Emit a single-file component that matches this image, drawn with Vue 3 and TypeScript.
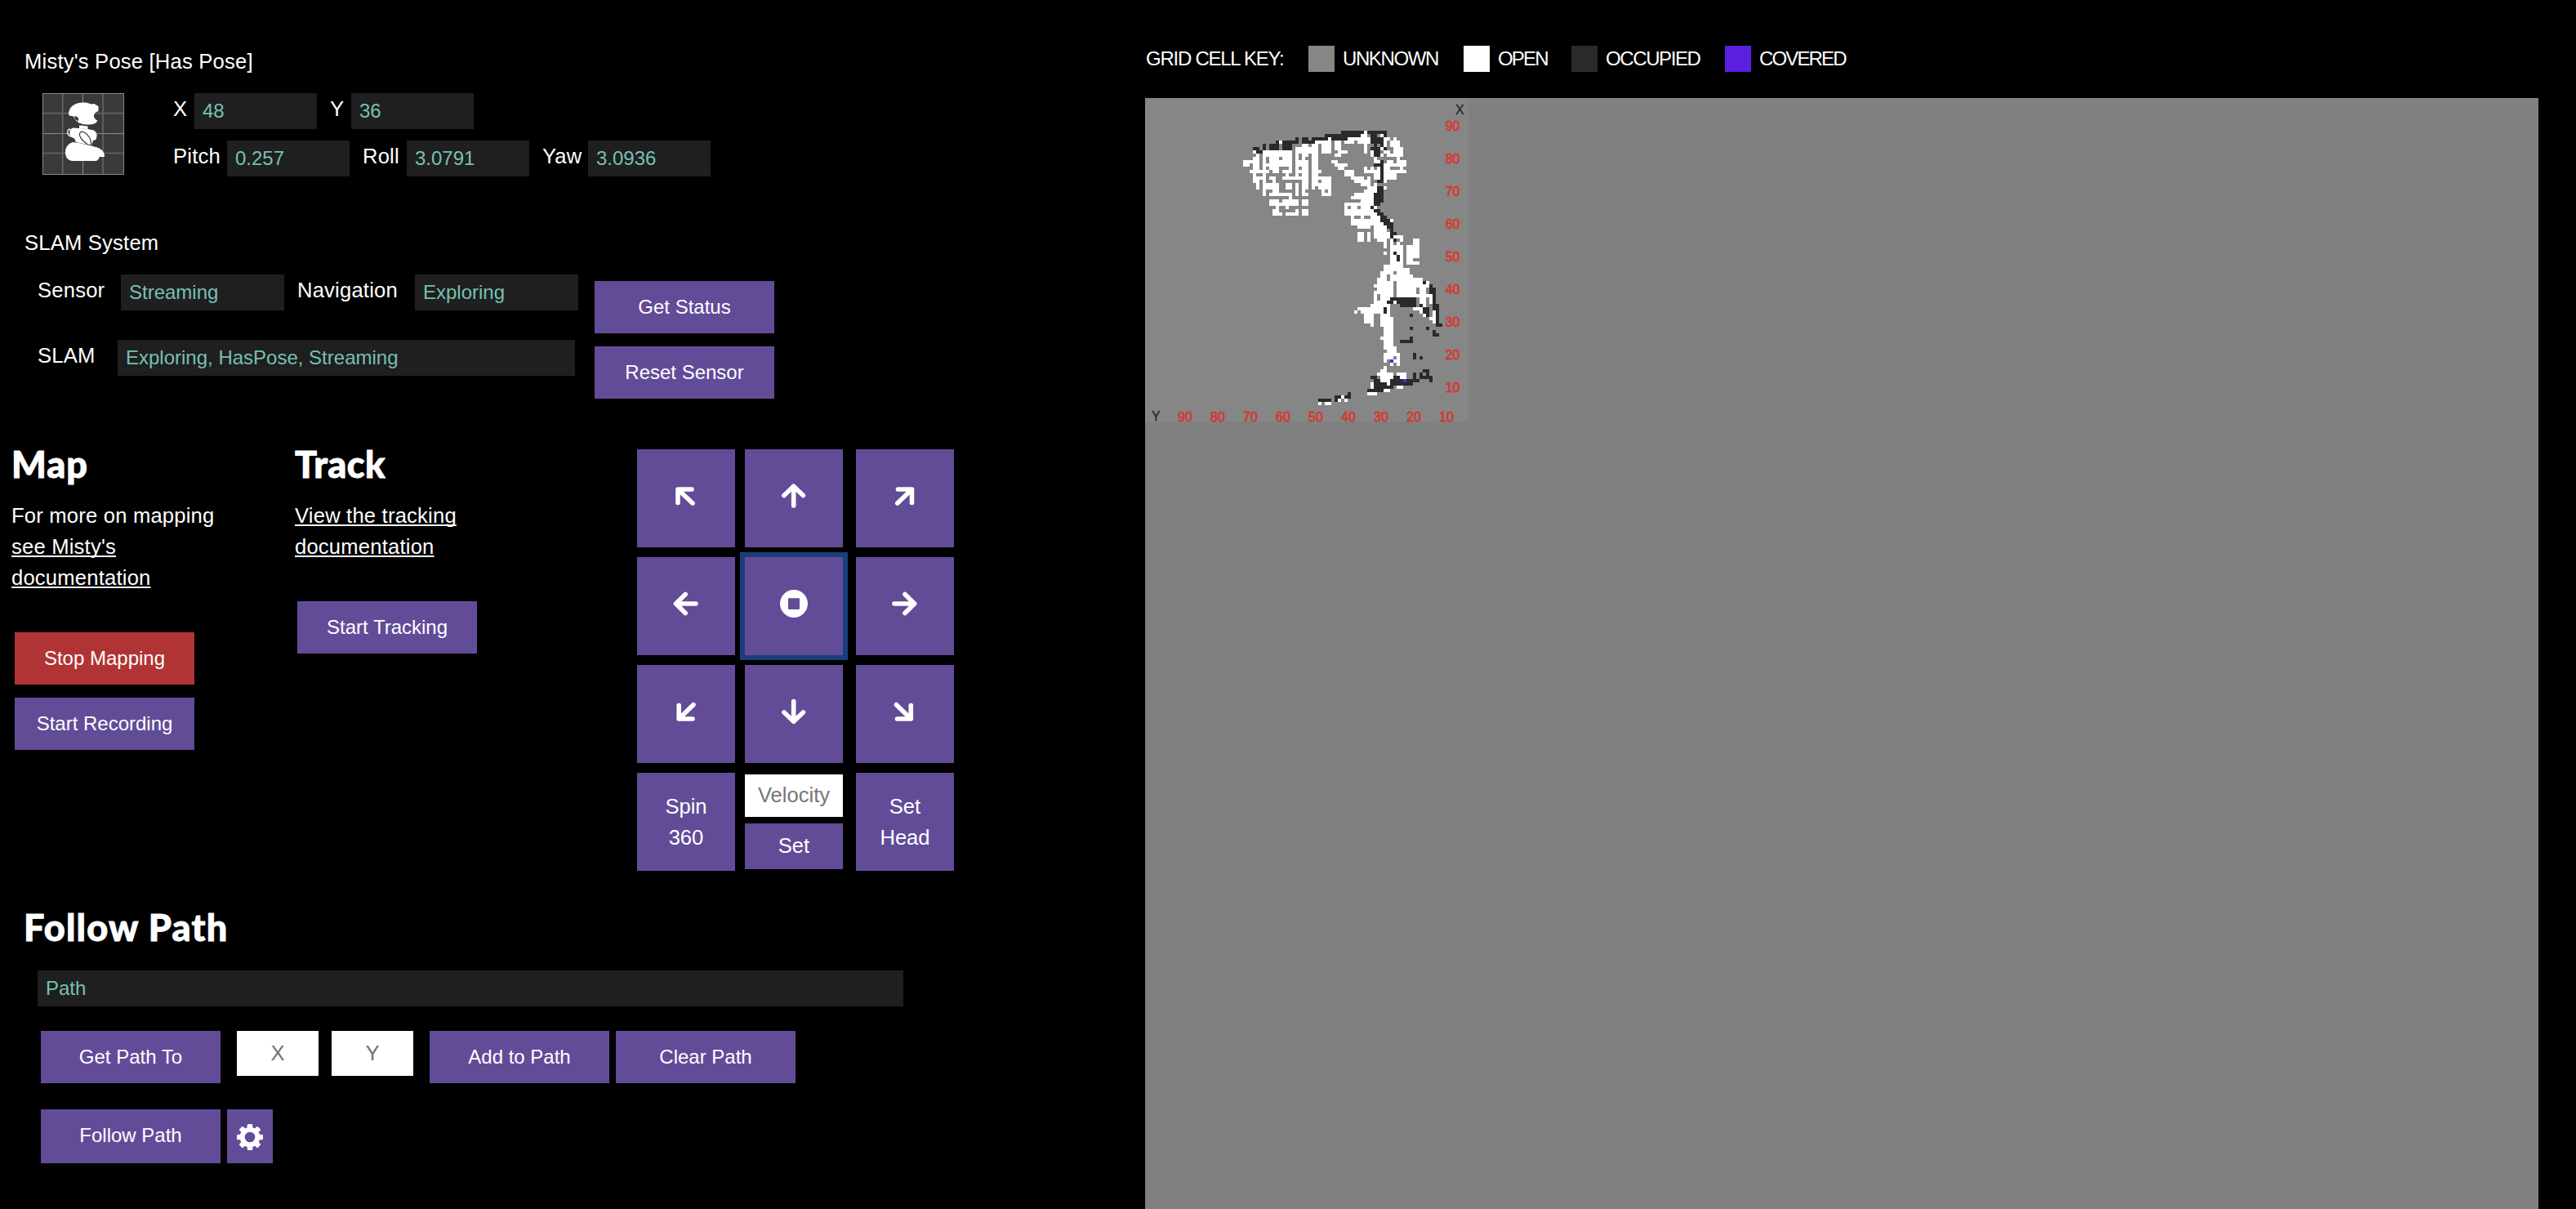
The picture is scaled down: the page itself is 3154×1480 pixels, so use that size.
<script setup lang="ts">
type Kind = 'd' | 'w' | 'p'
interface Run { x: number; y: number; w: number; kind: Kind }

const FIRST_ROW = 10

// Each entry is one grid row; a token is "<kind><first column>[-<last column>]".
const rows: string[] = [
  'd60-66 w67 d68-73',
  'd55-65 w66-67 d69-70 w72 d73',
  'd46 d48-49 d51-55 w56 d57-61 w62-68 d69-72 w73-74 w76',
  'd40 w41 d42-46 d48-51 w52-56 w58-59 w61-63 w65-68 d69-72 w73 w75-77',
  'd36 d38-40 d42-44 w48-49 w51-52 w54-56 w58-59 w67 d70 d72 w73 w75-77',
  'd33-34 d36 d38-40 d42-44 w46-52 w54-56 w58-59 w67 d69-71 w72 d73 w76-78',
  'w33 d34-35 w36-44 w46-52 w54-56 w59-61 w67 w69 d70-71 w73-74 w76-78',
  'w34 w36-44 w46 w48-49 w51-52 w58-59 w69 d70-71 w72 w74-78',
  'w33-34 w36 w38-40 w42-44 w46 w48 w51-52 w70 w77',
  'w30-34 w36 w38-44 w46-49 w51-52 w57-58 w70-71 d72 w74-75 w77-79',
  'w30-31 w33-34 w36-44 w46-49 w51-52 w58-61 d70-72 w73-79',
  'w33-34 w36 w38-40 w44 w46 w48-49 w51-52 w59-60 w67 w69 w71 d72 w73-74 w78',
  'w32-37 w39-40 w42-44 w46-49 w51-53 w61-63 w67-71 d72 w73-79',
  'w33 w36 w43 w46 w48-49 w51-52 w61-63 w70-71 d72 w73-76',
  'w33-36 w38-39 w42-49 w51-56 w63-66 w68 w70-71 d72 w73-76',
  'w33-34 w36 w39 w48-49 w51-52 w54-56 w64-68 d71-72 w73',
  'w34 w36-40 w43-44 w46 w48-49 w51-56 w66-68 w70',
  'w34 w36-40 w43-44 w46 w48-49 w51 w53-56 w68-70 d71-72 w73',
  'w36 w39-40 w46 w48 w54 w56 w67-70 d71-72',
  'w36 w38-44 w46 w48-49 w54-56 w64-69 d70-72',
  'w44 w63-69 d70-72',
  'w38-40 w42-46 w48-49 w66-69 d70-72',
  'w38-46 w48-49 w61-69 d70-71',
  'w40 w43 w61 w63-64 w66-68 d69 w70',
  'w39-40 w46 w48-49 w61-69 d70-71',
  'w39-41 w43-46 w48-49 w61-70 d71-72',
  'w63 w66 w69-71 d72-73',
  'w63-71 d72-74 w75',
  'w63-72 d73-75',
  'w65-68 w70-73 d74-75',
  'w70-73 d75',
  'w65-66 w68 w70-74 d75-76',
  'w65-66 w68 w70-74 d75 w76-78',
  'w65-66 w68 w71-73 w75 d76 w78 w82-83',
  'w73 w75 w77 w82-83',
  'w73 w75-78 w80-83',
  'w75-78 w80-83',
  'w73 w75 d76 w77-78 w80-83',
  'w75-76 d77 w78 w80-83',
  'w75-76 d77 w78 w80-81',
  'w75-78 w80-83',
  'w73-78',
  'w73-80',
  'w72-75 w77-80',
  'w72-73 w75-81',
  'w71-73 w75-84',
  'w71-75 w77-84 d85 w86',
  'w70-75 w77-86 d87',
  'w71-75 w77-82 w84-85 d87-88',
  'w70-75 w77-82 w84-85 d87-88',
  'w70 w72-75 w77-87 d88',
  'w70 w72-74 d75-82 w84-85 w87 d88',
  'w70-73 d74-75 w76 d77-82 w84-85 w87 d88',
  'w69-74 d78-82 d84 w85 d88-89',
  'w65-72 d73 w74 w82-84 d85-86 d88-89',
  'w64 w66-72 d73 w74 w84 d85-86 w88 d89',
  'w67-69 w72-74 d81 w85 d86 w88 d89',
  'w67-69 w72-75 w87-88 d89',
  'w67-69 w72-75 w88 d89',
  'w69 w72-75 d89-90',
  'w73-75 d81 d86',
  'w73-75 d88',
  'w73-75 d88-89',
  'w72-75 d81',
  'w73-75 d78-81',
  'w73-75',
  'w73-76',
  'w74-76',
  'w73-77 d82',
  'w73-75 w77 d82 d84',
  'w73 p75 w76-77',
  'w75 w77',
  'w73',
  'w72-73 d85-86',
  'w71-75 w77-79 d82 d84 d86',
  'd69-70 w72-75 d76-77 w78-79 d82 d84-87',
  'd70-71 w72-74 d75-78 p79 d80-83 d87',
  'w69 d70-73 w74 d75-81',
  'w69 d70-75 w77-78',
  'd68-72 w73-74',
  'd62 w68-70',
  'd58-59 w60 d61-62',
  'd53-56 d58 w59 w61',
  'w53 w55-56',
]

const fills: Record<Kind, string> = { d: '#2a2a2a', w: '#ffffff', p: '#5b1fe0' }

const runs: Run[] = rows.flatMap((row, i) =>
  row.split(' ').map((token) => {
    const [from, to] = token.slice(1).split('-').map(Number)
    return { x: from * 4, y: (FIRST_ROW + i) * 4, w: ((to ?? from) - from + 1) * 4, kind: token[0] as Kind }
  }),
)

const ticks = [90, 80, 70, 60, 50, 40, 30, 20, 10]

const legend = [
  { name: 'UNKNOWN', cls: 'unknown' },
  { name: 'OPEN', cls: 'open' },
  { name: 'OCCUPIED', cls: 'occupied' },
  { name: 'COVERED', cls: 'covered' },
]

interface PadKey { id: string; d: string }
const pad: PadKey[] = [
  { id: 'up-left', d: 'M67 49H50V65.500M50.500 49.500L68 66' },
  { id: 'up', d: 'M48 56.500L59.700 45.200L71.400 56.500M59.700 46V69' },
  { id: 'up-right', d: 'M51.500 49H68.500V65.500M68 49.500L50.800 66' },
  { id: 'left', d: 'M59.200 45.500L47.500 57L59.200 68.500M48 57H72' },
  { id: 'stop', d: '' },
  { id: 'right', d: 'M60 45.500L71.700 57L60 68.500M71 57H47' },
  { id: 'down-left', d: 'M51.200 49.500V66H68M51.700 65.500L69 48.700' },
  { id: 'down', d: 'M48 58L59.700 69.300L71.400 58M59.700 68.500V44.500' },
  { id: 'down-right', d: 'M67.300 49.500V66H50.500M66.800 65.500L49.500 48.700' },
]
</script>

<template>
  <main class="page">
    <section class="controls">
      <div class="title pose-title">Misty's Pose [Has Pose]</div>
      <div class="pose">
        <svg class="robot" viewBox="0 0 100 100">
          <rect width="100" height="100" fill="#3a3a3a" />
          <path d="M24.700 0V100M74 0V100M0 24.700H100M0 73.500H100" stroke="#646464" stroke-width="1.700" />
          <path d="M49.500 0V100M0 49.500H100M.5.500H99.500V99.500H.5Z" stroke="#8a8a8a" fill="none" />
          <path d="M32 26C32 17 39 11.500 50 11.500C55 11.500 57 12.500 60 13.500L63 13L68.500 16V22C65 23 63 25 63 28C63 30 65 33 67.500 33.500C66 38 59 39 53 38.500C47 37.500 42 36 40 32L38 28.500L33 27.500Z" fill="#fff" />
          <path d="M39 28.500Q41 27.500 44 30.500V34.500L40.500 32.500Z" fill="#3a3a3a" />
          <path d="M45 39.500L55.500 40.500V44L45 43Z" fill="#fff" />
          <path d="M34 44Q30 44 31 50L33.500 53" fill="none" stroke="#fff" stroke-width="1.300" />
          <path d="M33.500 45L37 42.500L53 43.500L63 45.500Q67 48 66.500 53L65.500 57L62 58L60 64L41 60L39 55.500L33.500 53Z" fill="#fff" />
          <path d="M46.500 48C43.500 51 47 57 55.500 63Q60 65 59.500 61C59 56 56 51 52 48.500Q48.500 46 46.500 48Z" fill="#fff" stroke="#3a3a3a" stroke-width="1.200" />
          <path d="M28 74C27.500 66 32 61 38 60C48 61.500 60 64.500 67 66.500C74 69 76 73 76 78H70Q68 83 65 83H36Q29 82 28 74Z" fill="#fff" />
        </svg>
        <div class="pose-fields">
          <div class="line">
            <span class="label w26">X</span><span class="value w150">48</span>
            <span class="label w26 next">Y</span><span class="value w150">36</span>
          </div>
          <div class="line">
            <span class="label w66">Pitch</span><span class="value w150">0.257</span>
            <span class="label w54 next">Roll</span><span class="value w150">3.0791</span>
            <span class="label w56 next">Yaw</span><span class="value w150">3.0936</span>
          </div>
        </div>
      </div>

      <div class="title slam-title">SLAM System</div>
      <div class="slam">
        <div class="slam-fields">
          <div class="line">
            <span class="label w102">Sensor</span><span class="value w200">Streaming</span>
            <span class="label w144 next">Navigation</span><span class="value w200">Exploring</span>
          </div>
          <div class="line">
            <span class="label w98">SLAM</span><span class="value w560">Exploring, HasPose, Streaming</span>
          </div>
        </div>
        <div class="slam-actions">
          <button class="btn">Get Status</button>
          <button class="btn">Reset Sensor</button>
        </div>
      </div>

      <div class="middle">
        <div class="map-col">
          <h2>Map</h2>
          <p>For more on mapping <a>see Misty's documentation</a></p>
          <button class="btn stop">Stop Mapping</button>
          <button class="btn">Start Recording</button>
        </div>
        <div class="track-col">
          <h2 class="track">Track</h2>
          <p><a>View the tracking documentation</a></p>
          <button class="btn">Start Tracking</button>
        </div>
        <div class="pad">
          <button v-for="key in pad" :key="key.id" class="key" :class="{ focused: key.id === 'stop' }">
            <svg viewBox="0 0 120 120">
              <template v-if="key.id === 'stop'">
                <circle cx="60" cy="57" r="17" fill="#fff" />
                <rect x="53" y="50.300" width="14" height="13.600" rx="1" fill="#624c98" />
              </template>
              <path v-else :d="key.d" fill="none" stroke="#fff" stroke-width="5.600" stroke-linecap="round" stroke-linejoin="round" />
            </svg>
          </button>
          <button class="key">Spin<br />360</button>
          <div class="velocity">
            <div class="vel-input">Velocity</div>
            <button class="vel-set">Set</button>
          </div>
          <button class="key">Set<br />Head</button>
        </div>
      </div>

      <h2 class="follow">Follow Path</h2>
      <div class="value path">Path</div>
      <div class="path-row">
        <button class="btn">Get Path To</button>
        <div class="coord first">X</div>
        <div class="coord">Y</div>
        <button class="btn add">Add to Path</button>
        <button class="btn">Clear Path</button>
      </div>
      <div class="follow-row">
        <button class="btn tall">Follow Path</button>
        <button class="cog">
          <svg viewBox="0 0 32 32">
            <g fill="#fff">
              <rect v-for="n in 4" :key="n" x="12.700" y="0" width="6.600" height="32" rx="1.500" :transform="`rotate(${n * 45} 16 16)`" />
              <circle cx="16" cy="16" r="12.300" />
            </g>
            <circle cx="16" cy="16" r="6.300" fill="#624c98" />
          </svg>
        </button>
      </div>
    </section>

    <section class="viewer">
      <div class="legend">
        <span class="legend-title">GRID CELL KEY:</span>
        <span v-for="item in legend" :key="item.name" class="legend-item" :class="item.cls">
          <i class="swatch"></i><span>{{ item.name }}</span>
        </span>
      </div>
      <div class="map">
        <svg class="grid" width="396" height="396" viewBox="0 0 396 396">
          <rect width="396" height="396" fill="#868686" />
          <g shape-rendering="crispEdges">
            <rect v-for="(run, i) in runs" :key="i" :x="run.x" :y="run.y" :width="run.w" height="4" :fill="fills[run.kind]" />
          </g>
          <g class="tick">
            <text v-for="(t, i) in ticks" :key="`x${t}`" x="367.700" :y="40 + i * 40">{{ t }}</text>
            <text v-for="(t, i) in ticks" :key="`y${t}`" :x="40 + i * 40" y="395.500">{{ t }}</text>
          </g>
          <g class="axis">
            <text x="380" y="20">X</text>
            <text x="8" y="395">Y</text>
          </g>
        </svg>
      </div>
    </section>
  </main>
</template>

<style>
body { background: #000; }
</style>

<style scoped>
.page {
  display: flex;
  width: 3154px;
  height: 1480px;
  overflow: hidden;
  background: #000;
  color: #fff;
  font: 25.6px/38px "Liberation Sans", Arial, sans-serif;
}
.page * { box-sizing: border-box; }
button { border: 0; margin: 0; padding: 0; color: #fff; background: #624c98; font: inherit; border-radius: 0; }
.controls { width: 1402px; flex: none; }
.title { height: 38px; padding-left: 30px; letter-spacing: 0.200px; }
.pose-title { margin-top: 56px; }
.pose { display: flex; margin-top: 20px; padding-left: 52px; height: 102px; }
.robot { display: block; width: 100px; height: 100px; }
.pose-fields { margin-left: 60px; display: flex; flex-direction: column; gap: 14px; }
.line { display: flex; height: 44px; align-items: flex-start; }
.label { flex: none; white-space: nowrap; letter-spacing: 0.200px; }
.next { margin-left: 16px; }
.value { flex: none; height: 44px; padding-left: 10px; background: #1f1f1f; color: #76c0b5; font-size: 24px; line-height: 43px; white-space: nowrap; }
.w26 { width: 26px; }
.w66 { width: 66px; }
.w54 { width: 54px; }
.w56 { width: 56px; }
.w102 { width: 102px; }
.w144 { width: 144px; }
.w98 { width: 98px; }
.w150 { width: 150px; }
.w200 { width: 200px; }
.w560 { width: 560px; }
.slam-title { margin-top: 62px; }
.slam { display: flex; padding-left: 46px; margin-top: 20px; height: 152px; }
.slam-fields { width: 682px; display: flex; flex-direction: column; gap: 36px; }
.slam-actions { display: flex; flex-direction: column; gap: 16px; padding-top: 8px; }
.btn { display: block; flex: none; width: 220px; height: 64px; font-size: 24px; line-height: 64px; text-align: center; white-space: nowrap; }
.btn.stop { background: #b03434; margin-bottom: 16px; }
h2 { margin: 0; font: 900 45px/54px Lato, "Open Sans", sans-serif; letter-spacing: 1px; -webkit-text-stroke: 0.900px #fff; }
h2.track { letter-spacing: 0.400px; }
.middle { display: flex; height: 590px; margin-top: 3px; }
.map-col { width: 361px; padding: 50px 0 0 14px; }
.track-col { width: 419px; padding-top: 50px; }
.middle p { margin: 17px 0 48px; letter-spacing: 0.200px; }
.map-col p { width: 260px; }
.track-col p { width: 220px; }
.map-col .btn { margin-left: 4px; }
.track-col .btn { margin-left: 3px; }
a { color: #fff; text-decoration: underline; text-decoration-thickness: 2px; text-underline-offset: 2px; text-decoration-skip-ink: none; }
.pad { display: grid; grid-template-columns: 132px 136px 120px; grid-auto-rows: 120px; row-gap: 12px; padding-top: 59px; }
.key { width: 120px; height: 120px; line-height: 38.400px; }
.key svg { display: block; width: 120px; height: 120px; }
.focused { outline: 6px solid #193e7b; }
.velocity { width: 120px; padding-top: 2px; }
.vel-input { height: 52px; background: #fff; color: #777; text-align: center; line-height: 50px; }
.vel-set { display: block; width: 120px; height: 56px; margin-top: 8px; padding-bottom: 2px; line-height: 54px; }
.follow { padding-left: 29px; margin-top: 27px; letter-spacing: 1.250px; }
.path { margin: 26px 0 0 46px; width: 1060px; }
.path-row { display: flex; align-items: flex-start; padding-left: 50px; margin-top: 30px; }
.coord { width: 100px; height: 55px; margin-right: 16px; background: #fff; color: #6c757d; text-align: center; line-height: 54px; }
.coord.first { margin-left: 20px; }
.coord + .add { margin-left: 4px; }
.add { margin: 0 8px 0 4px; }
.follow-row { display: flex; gap: 8px; padding-left: 50px; margin-top: 32px; }
.btn.tall { height: 66px; line-height: 64px; padding-bottom: 2px; }
.cog { width: 56px; height: 66px; display: flex; align-items: center; justify-content: center; padding-top: 2px; }
.cog svg { width: 32px; height: 32px; display: block; }
.viewer { width: 1706px; flex: none; display: flex; flex-direction: column; }
.legend { display: flex; height: 120px; padding-top: 56px; font-size: 24px; line-height: 32px; white-space: nowrap; }
.legend-title { width: 200px; padding-left: 1px; flex: none; letter-spacing: -1.250px; }
.legend-item { display: flex; gap: 10px; flex: none; letter-spacing: -1.400px; }
.unknown { width: 190px; }
.open { width: 132px; letter-spacing: -1.800px; }
.occupied { width: 188px; }
.covered { letter-spacing: -1.850px; }
.swatch { width: 32px; height: 32px; background: #868686; flex: none; }
.open .swatch { background: #fff; }
.occupied .swatch { background: #2a2a2a; }
.covered .swatch { background: #5b1fe0; }
.map { flex: 1; background: #808080; }
.grid { display: block; overflow: visible; font: 16px "Liberation Sans", Arial, sans-serif; }
.tick { fill: #d33b34; stroke: #d33b34; stroke-width: 0.800px; }
.axis { fill: #2a2a2a; stroke: #2a2a2a; stroke-width: 0.400px; }
</style>
